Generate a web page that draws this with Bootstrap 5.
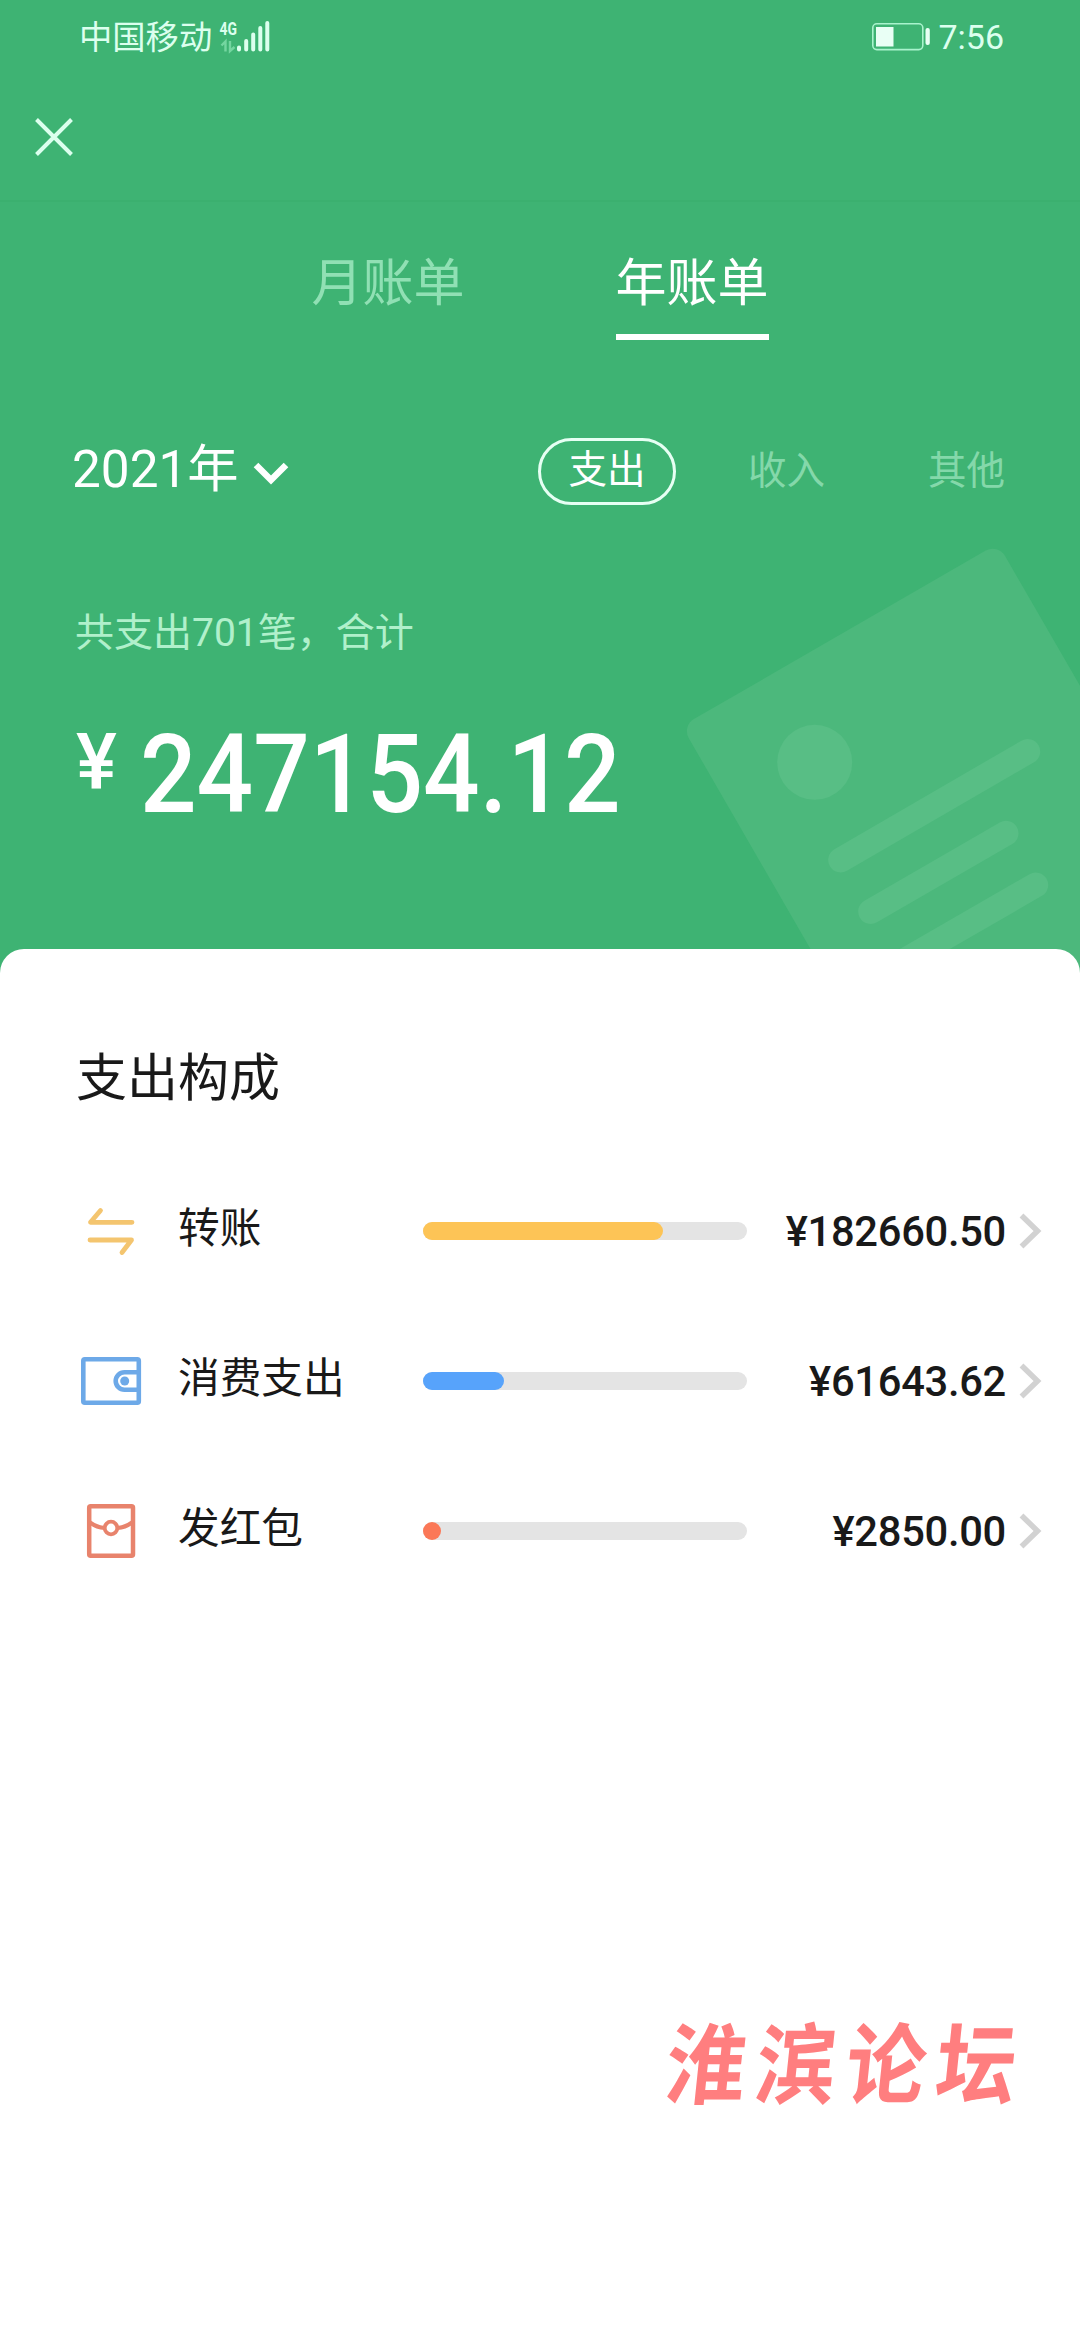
<!DOCTYPE html>
<html lang="zh-CN">
<head>
<meta charset="utf-8">
<meta name="viewport" content="width=device-width, initial-scale=1">
<title>年账单</title>
<link href="https://cdn.jsdelivr.net/npm/bootstrap@5.3.0/dist/css/bootstrap.min.css" rel="stylesheet">
<style>
  body { font-family: Roboto, "Noto Sans CJK SC", sans-serif; background: #fff; color: #191919; }
  svg { display: block; flex: none; }
  .screen { width: 1080px; height: 2340px; }
  .hero { height: 973px; background: #3eb373; color: #fff; }
  .receipt-art { right: 0; top: 520px; }
  .status { height: 74px; padding: 0 76px 0 79px; color: #dcffee; }
  .carrier { font-size: 33.3px; line-height: 74px; padding-top: 2px; }
  .signal { margin-left: 6px; }
  .clock { font-size: 34px; line-height: 74px; }
  .titlebar { height: 128px; padding: 44px 35px 0; border-bottom: 2px solid #3bb06f; }
  .bill-tabs { height: 138px; gap: 151px; padding-top: 42px; font-size: 51px; }
  .bill-tab { line-height: 80px; height: 96px; color: #90e0b4; }
  .bill-tab.on { color: #fff; border-bottom: 6px solid #fff; }
  .filters { margin-top: 97px; height: 68px; padding-left: 72px; }
  .year { font-size: 51.3px; line-height: 66px; padding-bottom: 3px; }
  .year svg { margin: 9px 0 0 14px; }
  .kinds { font-size: 38.5px; color: #84d8aa; }
  .kind-on { width: 138px; height: 67px; line-height: 58px; border: 3px solid #e6fff3; color: #fff; margin-right: 72px; }
  .kind-b { width: 180px; line-height: 64px; }
  .kind-c { width: 152px; line-height: 64px; }
  .summary { margin-top: 98px; padding-left: 75px; font-size: 39px; line-height: 60px; color: #b0f0cb; }
  .total { padding: 57px 0 0 76px; font-weight: 500; }
  .yen { font-size: 77px; line-height: 77px; padding-top: 4px; }
  .sum { font-size: 109px; line-height: 110px; transform: scaleX(.914); transform-origin: 0 0; margin-left: 23px; }
  .sheet { margin-top: -24px; height: 1391px; border-radius: 24px 24px 0 0; padding: 90px 38px 0 76px; }
  .sheet-title { font-size: 51px; line-height: 80px; margin-bottom: 37px; }
  .item { height: 150px; }
  .item-icon { width: 102px; }
  .item-name { width: 245px; font-size: 41.7px; line-height: 60px; padding-bottom: 5px; }
  .item-bar { width: 324px; height: 18px; border-radius: 9px; background: #e4e4e4; }
  .item-fill { height: 18px; border-radius: 9px; }
  .item-sum { font-size: 41.7px; line-height: 60px; font-weight: 500; padding-right: 13px; letter-spacing: -.3px; padding-top: 2px; }
  .forum { margin-top: 402px; padding-right: 20px; font-family: "Noto Sans CJK SC", sans-serif; font-weight: 700; font-size: 80px; line-height: 100px; color: #ff7e7f; }
  .forum span { display: inline-block; width: 90px; text-align: center; transform: skewX(-6deg) scaleY(1.1); }
</style>
<script src="https://cdn.jsdelivr.net/npm/bootstrap@5.3.0/dist/js/bootstrap.bundle.min.js"></script>
</head>
<body>
<div class="screen overflow-hidden">
  <header class="hero position-relative">
    <svg class="receipt-art position-absolute" width="440" height="453" viewBox="640 520 440 453" aria-hidden="true">
      <rect width="365" height="560" rx="14" transform="translate(681.8 726.1) rotate(-30)" fill="#4cb87c"/>
      <circle cx="814.7" cy="762.3" r="37.5" fill="#58be85"/>
      <path d="M840.7 860L1027.7 751.5M870.7 911.5L1006 833.3M890 969L1035.7 885" stroke="#58be85" stroke-width="25" stroke-linecap="round"/>
    </svg>

    <div class="status d-flex align-items-center justify-content-between">
      <div class="d-flex align-items-center">
        <span class="carrier">中国移动</span>
        <svg width="52" height="54" viewBox="218 10 52 54" class="signal">
          <text x="219.5" y="34.500" font-size="18.5" font-weight="700" textLength="17.5" lengthAdjust="spacingAndGlyphs" fill="#dcffee">4G</text>
          <g fill="none" stroke="#74d6a0" stroke-width="2.4"><path d="M221.5 45.500l4-4v10M230 41v10l4.500-4"/></g>
          <g stroke="#dcffee" stroke-width="4" stroke-linecap="round"><path d="M239 47.500v2M246.200 41v8.500M253.200 34.500v15M260.300 28v21.500M267.300 23v26.500"/></g>
        </svg>
      </div>
      <div class="d-flex align-items-center">
        <svg width="58" height="28" viewBox="871 23 58 28" class="me-2">
          <rect x="871.800" y="23.800" width="50" height="25.800" rx="4" fill="none" stroke="#a9f3cd" stroke-width="1.600"/>
          <rect x="875" y="27" width="17.500" height="19.500" fill="#e9fff5"/>
          <rect x="924.500" y="28" width="4.300" height="17" rx="2" fill="#e9fff5"/>
        </svg>
        <span class="clock">7:56</span>
      </div>
    </div>

    <div class="titlebar">
      <svg width="38" height="38" viewBox="0 0 38 38" fill="none" stroke="#dcffee" stroke-width="4"><path d="M1.500 1.500l35 35M36.500 1.500l-35 35"/></svg>
    </div>

    <nav class="bill-tabs d-flex justify-content-center">
      <div class="bill-tab">月账单</div>
      <div class="bill-tab on">年账单</div>
    </nav>

    <div class="filters d-flex align-items-center">
      <div class="year d-flex align-items-center me-auto">2021年
        <svg width="36" height="24" viewBox="0 0 36 24" fill="none" stroke="#fff" stroke-width="6.500"><path d="M3 3L18 18L33 3"/></svg>
      </div>
      <div class="kinds d-flex align-items-center">
        <div class="kind-on rounded-pill text-center">支出</div>
        <div class="kind-b">收入</div>
        <div class="kind-c">其他</div>
      </div>
    </div>

    <div class="summary">共支出701笔，合计</div>
    <div class="total d-flex align-items-start">
      <span class="yen">¥</span>
      <span class="sum">247154.12</span>
    </div>
  </header>

  <main class="sheet bg-white position-relative">
    <div class="sheet-title">支出构成</div>

    <div class="item d-flex align-items-center">
      <div class="item-icon">
        <svg width="70" height="60" viewBox="76 1201 70 60" fill="none" stroke="#f4c56f" stroke-width="4.800" stroke-linecap="round" stroke-linejoin="round"><path d="M132 1222.300H90.500L100.500 1210.500M90 1240H131.500L122 1252.500"/></svg>
      </div>
      <div class="item-name">转账</div>
      <div class="item-bar"><div class="item-fill" style="width:74%;background:#fdc456"></div></div>
      <div class="item-sum ms-auto">¥182660.50</div>
      <svg width="23" height="36" viewBox="0 0 23 36" fill="none" stroke="#d2d2d2" stroke-width="5.500"><path d="M2.500 2.500L18.500 18L2.500 33.500"/></svg>
    </div>

    <div class="item d-flex align-items-center">
      <div class="item-icon">
        <svg width="70" height="60" viewBox="76 1351 70 60" fill="none" stroke="#6da9e8" stroke-width="4.600"><rect x="83.300" y="1359.300" width="55.500" height="43.500" rx="1.500"/><path d="M138 1372.200H124.500a8.800 8.800 0 0 0 0 17.600H138"/><circle cx="124.700" cy="1381" r="4.500" fill="#6da9e8" stroke="none"/></svg>
      </div>
      <div class="item-name">消费支出</div>
      <div class="item-bar"><div class="item-fill" style="width:25%;background:#57a3fb"></div></div>
      <div class="item-sum ms-auto">¥61643.62</div>
      <svg width="23" height="36" viewBox="0 0 23 36" fill="none" stroke="#d2d2d2" stroke-width="5.500"><path d="M2.500 2.500L18.500 18L2.500 33.500"/></svg>
    </div>

    <div class="item d-flex align-items-center">
      <div class="item-icon">
        <svg width="70" height="60" viewBox="76 1501 70 60" fill="none" stroke="#e8836c" stroke-width="4.500"><rect x="89.200" y="1506.200" width="43.800" height="49.500" rx="1.500"/><path d="M90 1522.500Q97 1527.500 104.500 1528M132 1522.500Q125 1527.500 117.500 1528" stroke-width="4"/><circle cx="111" cy="1528" r="6.300" stroke-width="3.800"/></svg>
      </div>
      <div class="item-name">发红包</div>
      <div class="item-bar"><div class="item-fill" style="width:5.6%;background:#fb7857"></div></div>
      <div class="item-sum ms-auto">¥2850.00</div>
      <svg width="23" height="36" viewBox="0 0 23 36" fill="none" stroke="#d2d2d2" stroke-width="5.500"><path d="M2.500 2.500L18.500 18L2.500 33.500"/></svg>
    </div>

    <div class="forum d-flex justify-content-end"><span>淮</span><span>滨</span><span>论</span><span>坛</span></div>
  </main>
</div>
</body>
</html>
